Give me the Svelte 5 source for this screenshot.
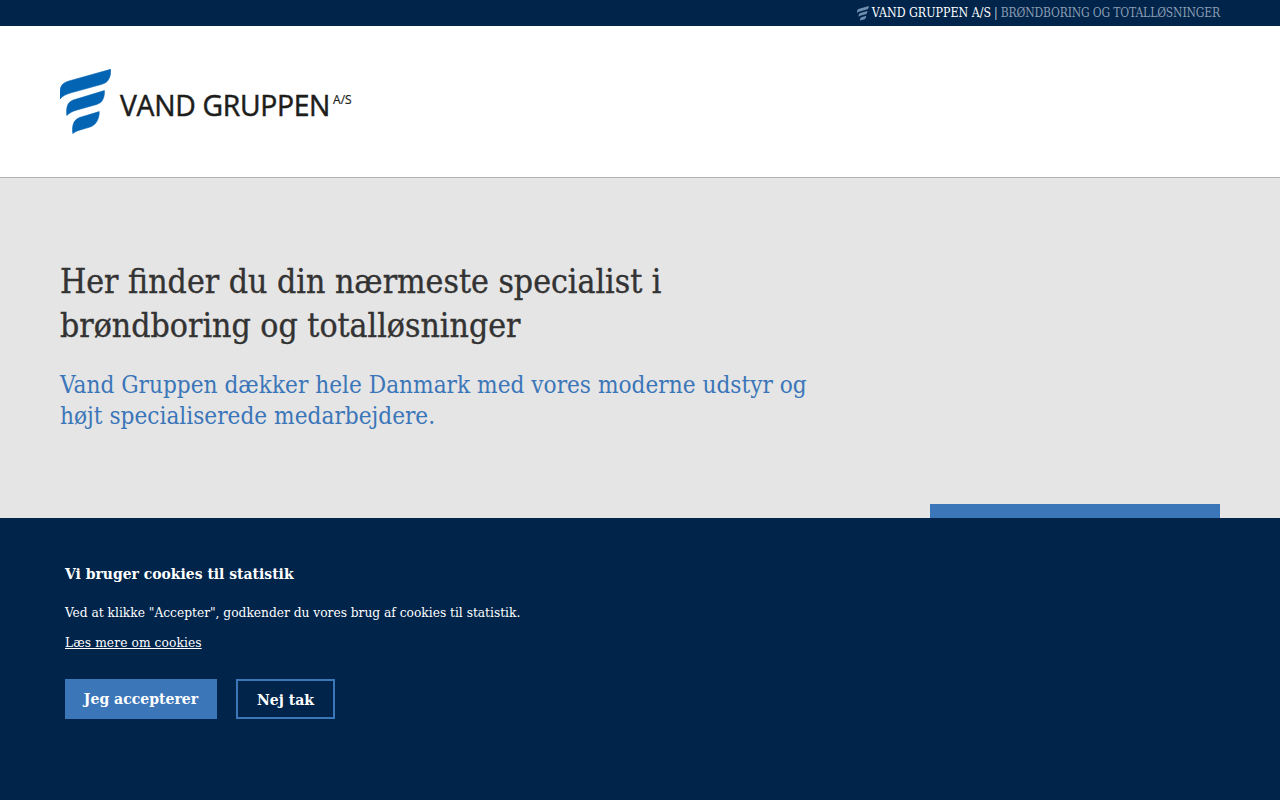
<script lang="ts">
	const blades = [
		'M0 30C-.4 24-.2 19 2 16 3.5 14 6 13 9 12L50.7.3C50.9 5 50 9 47.5 12 46 13.8 44 14.6 41 15.5L11 23.8C6 25.2 2.5 27 0 30Z',
		'M6.8 46.5C6.4 42 6.5 38 8.2 35 9.3 33 11.5 31.6 14 30.8L44.4 21.6C44.6 25.5 44 29 42 32 40.8 33.6 39 34.6 36.5 35.5L17 41C12.5 42.2 9.5 43.8 6.8 46.5Z',
		'M12.8 64.6C12.3 60.5 12.4 57 13.8 53.8 15 51.4 16.8 49.6 19.5 48.6L39.2 42.6C39.4 46.5 38.4 50 36.5 53 34.8 55.6 32.8 57 30 58L20 61C17 61.8 14.8 62.8 12.8 64.6Z'
	];
</script>

<div class="page">
	<div class="topbar">
		<svg class="mini" viewBox="0 0 51 65" width="12" height="15" aria-hidden="true">
			{#each blades as d}<path {d} />{/each}
		</svg>
		<span class="company">VAND GRUPPEN A/S</span>
		<span class="tagline"><span class="sep">|</span> BRØNDBORING OG TOTALLØSNINGER</span>
	</div>

	<header class="header">
		<div class="logo">
			<svg viewBox="0 0 51 65" width="51" height="65" aria-hidden="true">
				{#each blades as d}<path {d} />{/each}
			</svg>
			<span class="wordmark">VAND GRUPPEN</span>
			<span class="suffix">A/S</span>
		</div>
	</header>

	<main class="hero">
		<div class="intro">
			<h1>Her finder du din nærmeste specialist i brøndboring og totalløsninger</h1>
			<p>Vand Gruppen dækker hele Danmark med vores moderne udstyr og højt specialiserede medarbejdere.</p>
		</div>
		<div class="panel"></div>
	</main>

	<aside class="cookies">
		<h2>Vi bruger cookies til statistik</h2>
		<p>Ved at klikke "Accepter", godkender du vores brug af cookies til statistik.</p>
		<a href="#cookies">Læs mere om cookies</a>
		<div class="actions">
			<button class="accept">Jeg accepterer</button>
			<button class="decline">Nej tak</button>
		</div>
	</aside>
</div>

<style>
	:global(body) {
		margin: 0;
		background: #e5e5e5;
		font-family: 'DejaVu Serif', 'Liberation Serif', serif;
		font-stretch: condensed;
	}

	.page {
		position: relative;
		height: 800px;
		overflow: hidden;
	}

	.topbar {
		display: flex;
		justify-content: flex-end;
		align-items: center;
		gap: 3px;
		height: 26px;
		padding-right: 60px;
		background: #00244a;
		font-size: 12px;
		white-space: nowrap;
	}

	.mini path {
		fill: #6f8fb0;
	}

	.company {
		color: #fff;
		font-size: 12.3px;
	}

	.tagline {
		color: #8b9db3;
		letter-spacing: -0.15px;
	}

	.sep {
		color: #c5ced9;
		font-weight: 400;
	}

	.header {
		display: flex;
		align-items: center;
		height: 151px;
		padding-left: 60px;
		background: #fff;
		border-bottom: 1px solid #b3b3b3;
	}

	.logo {
		display: flex;
		align-items: flex-start;
	}

	.logo path {
		fill: #0364b3;
		stroke: #0364b3;
		stroke-width: 0.6;
	}

	.wordmark {
		margin: 19px 0 0 9px;
		color: #1d1d1b;
		font-family: 'Open Sans', sans-serif;
		font-stretch: normal;
		font-size: 28.3px;
		line-height: 34px;
		letter-spacing: -0.3px;
		-webkit-text-stroke: 0.5px #1d1d1b;
	}

	.suffix {
		margin: 24px 0 0 3px;
		color: #1d1d1b;
		font-family: 'Open Sans', sans-serif;
		font-stretch: normal;
		font-size: 12px;
		line-height: 14px;
		-webkit-text-stroke: 0.2px #1d1d1b;
	}

	.hero {
		display: flex;
		justify-content: space-between;
		align-items: flex-start;
		height: 622px;
		padding: 0 60px;
		background: #e5e5e5;
	}

	.intro {
		width: 760px;
		padding-top: 82px;
	}

	h1 {
		margin: 0;
		width: 640px;
		color: #333;
		font-size: 33.5px;
		font-weight: 400;
		line-height: 44px;
		-webkit-text-stroke: 0.35px #333;
	}

	.intro p {
		margin: 22px 0 0;
		color: #3b76b9;
		font-size: 24.15px;
		line-height: 31px;
	}

	.panel {
		width: 290px;
		height: 60px;
		margin-top: 326px;
		background: #3b76b9;
	}

	.cookies {
		position: absolute;
		left: 0;
		right: 0;
		bottom: 0;
		height: 282px;
		box-sizing: border-box;
		padding: 45px 65px 0;
		background: #00244a;
		color: #fff;
	}

	h2 {
		margin: 0;
		font-size: 15.5px;
		font-weight: 700;
		line-height: 22px;
	}

	.cookies p {
		margin: 17px 0 0;
		font-size: 13.6px;
		line-height: 20px;
	}

	.cookies a {
		display: inline-block;
		margin-top: 10px;
		color: #fff;
		font-size: 13.6px;
		line-height: 20px;
		letter-spacing: 0.1px;
	}

	.actions {
		display: flex;
		gap: 19px;
		margin-top: 27px;
	}

	button {
		height: 40px;
		box-sizing: border-box;
		border: 2px solid #3b76b9;
		color: #fff;
		font-family: inherit;
		font-stretch: condensed;
		font-size: 15.6px;
		font-weight: 700;
	}

	.accept {
		width: 152px;
		padding-bottom: 3px;
		background: #3b76b9;
	}

	.decline {
		width: 99px;
		background: transparent;
	}
</style>
